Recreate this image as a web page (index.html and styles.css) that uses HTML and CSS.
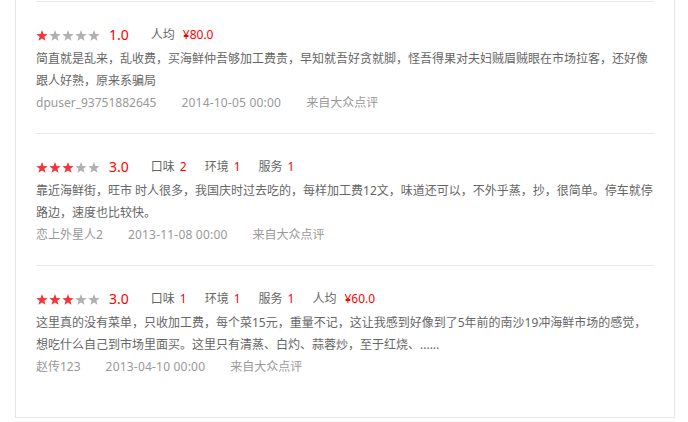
FILE: index.html
```html
<!DOCTYPE html>
<html lang="zh-CN">
<head>
  <meta charset="UTF-8" />
  <title>点评列表</title>
  <link rel="stylesheet" href="styles.css">
</head>
<body>
  <svg class="defs" width="0" height="0">
    <symbol id="star" viewBox="0 0 12 11">
      <polygon points="6,0 7.47,3.98 11.71,4.15 8.38,6.77 9.53,10.85 6,8.5 2.47,10.85 3.62,6.77 0.29,4.15 4.53,3.98" />
    </symbol>
  </svg>

  <div class="review-box">
    <div class="review">
      <div class="score-row">
        <span class="stars">
          <svg class="star on"><use href="#star" /></svg>
          <svg class="star"><use href="#star" /></svg>
          <svg class="star"><use href="#star" /></svg>
          <svg class="star"><use href="#star" /></svg>
          <svg class="star"><use href="#star" /></svg>
        </span>
        <span class="rating">1.0</span>
        <span class="item">人均<em class="price">¥80.0</em></span>
      </div>
      <p class="content">简直就是乱来，乱收费，买海鲜仲吾够加工费贵，早知就吾好贪就脚，怪吾得果对夫妇贼眉贼眼在市场拉客，还好像跟人好熟，原来系骗局</p>
      <div class="meta">
        <span>dpuser_93751882645</span>
        <span class="time">2014-10-05 00:00</span>
        <span>来自大众点评</span>
      </div>
    </div>

    <div class="review">
      <div class="score-row">
        <span class="stars">
          <svg class="star on"><use href="#star" /></svg>
          <svg class="star on"><use href="#star" /></svg>
          <svg class="star on"><use href="#star" /></svg>
          <svg class="star"><use href="#star" /></svg>
          <svg class="star"><use href="#star" /></svg>
        </span>
        <span class="rating">3.0</span>
        <span class="item">口味<em>2</em></span>
        <span class="item">环境<em>1</em></span>
        <span class="item">服务<em>1</em></span>
      </div>
      <p class="content">靠近海鲜街，旺市 时人很多，我国庆时过去吃的，每样加工费12文，味道还可以，不外乎蒸，抄，很简单。停车就停路边，速度也比较快。</p>
      <div class="meta">
        <span>恋上外星人2</span>
        <span class="time">2013-11-08 00:00</span>
        <span>来自大众点评</span>
      </div>
    </div>

    <div class="review">
      <div class="score-row">
        <span class="stars">
          <svg class="star on"><use href="#star" /></svg>
          <svg class="star on"><use href="#star" /></svg>
          <svg class="star on"><use href="#star" /></svg>
          <svg class="star"><use href="#star" /></svg>
          <svg class="star"><use href="#star" /></svg>
        </span>
        <span class="rating">3.0</span>
        <span class="item">口味<em>1</em></span>
        <span class="item">环境<em>1</em></span>
        <span class="item">服务<em>1</em></span>
        <span class="item">人均<em class="price">¥60.0</em></span>
      </div>
      <p class="content">这里真的没有菜单，只收加工费，每个菜15元，重量不记，这让我感到好像到了5年前的南沙19冲海鲜市场的感觉，想吃什么自己到市场里面买。这里只有清蒸、白灼、蒜蓉炒，至于红烧、......</p>
      <div class="meta">
        <span>赵传123</span>
        <span class="time">2013-04-10 00:00</span>
        <span>来自大众点评</span>
      </div>
    </div>
  </div>
</body>
</html>
```

FILE: styles.css
```css
body {
  margin: 0;
  background-color: #ffffff;
  font-family: "Noto Sans", "Noto Sans CJK SC", sans-serif;
  font-size: 12px;
  color: #666666;
}
.defs {
  position: absolute;
}
.review-box {
  width: 618px;
  margin-left: 15px;
  padding: 1px 20px 20px;
  border: 1px solid #e6e6e6;
  border-top: none;
}
.review {
  border-top: 1px solid #e8e8e8;
  padding: 22px 0 19px;
}
.score-row {
  display: flex;
  align-items: center;
  height: 22px;
  line-height: 22px;
}
.stars {
  display: flex;
  gap: 1px;
}
.star {
  width: 12px;
  height: 11px;
  fill: #b0b0b0;
}
.star.on {
  fill: #f5333a;
}
.rating {
  margin-left: 9px;
  margin-right: 22px;
  font-size: 14px;
  color: #ff0000;
}
.item {
  margin-right: 18px;
}
.item em {
  font-style: normal;
  color: #ff0000;
  margin-left: 5px;
}
.item em.price {
  margin-left: 8px;
}
.content {
  margin: 2px 0 0;
  line-height: 22px;
}
.meta {
  display: flex;
  gap: 25px;
  line-height: 22px;
  color: #999999;
}
.meta .time {
  letter-spacing: 0.2px;
}
```
